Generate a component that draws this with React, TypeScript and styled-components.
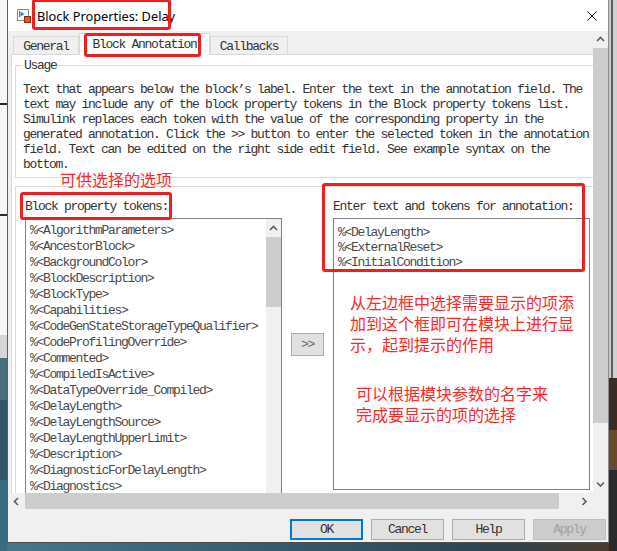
import React from "react";
import styled, { createGlobalStyle } from "styled-components";

const MONO = `"Liberation Mono", "DejaVu Sans Mono", monospace`;
const CJK = `"Noto Sans CJK SC", "Noto Sans CJK JP", sans-serif`;
const RED = "#ff2626";

const GlobalStyle = createGlobalStyle`
  html, body { margin: 0; padding: 0; }
  body { width: 617px; height: 551px; overflow: hidden; background: #2f5566; }
  * { box-sizing: border-box; }
`;

const Screen = styled.div`
  position: relative;
  width: 617px;
  height: 551px;
  display: grid;
  grid-template-columns: 7px 602px 8px;
  grid-template-rows: 543px 8px;
  overflow: hidden;
`;

const LeftDesk = styled.div`
  grid-column: 1;
  grid-row: 1 / span 2;
  background:
    linear-gradient(to bottom, transparent 0 103px, #2a2a2a 103px 105px, transparent 105px 214px, #2a2a2a 214px 216px, transparent 216px),
    linear-gradient(to bottom, #f7f7f7 0 335px, #d6d6d6 335px 358px, #4a6f7c 358px 400px, #2f5566 400px 480px, #3b6b80 480px);
`;

const RightDesk = styled.div`
  grid-column: 3;
  grid-row: 1 / span 2;
  background:
    linear-gradient(to bottom, transparent 0 378px, #3b2d22 378px 430px, #6a4a2a 430px 470px, #2b2a2a 470px),
    linear-gradient(to right, #c9c9c9 0 2px, #5d5d5d 2px 4px, #cfcfcf 4px);
`;

const BottomDesk = styled.div`
  grid-column: 2;
  grid-row: 2;
  background: linear-gradient(to right, #45778c 0%, #355a6c 45%, #2c4452 80%, #4b3a2c 100%);
`;

const Window = styled.div`
  grid-column: 2;
  grid-row: 1;
  display: flex;
  flex-direction: column;
  background: #f0f0f0;
  border-left: 1px solid #5f5f5f;
  border-right: 1px solid #8c8c8c;
  border-bottom: 1px solid #4d4d4d;
  overflow: hidden;
`;

const TitleBar = styled.div`
  height: 31px;
  flex: none;
  display: flex;
  align-items: center;
  padding: 0 11px 0 9px;
  background: #ffffff;
`;

const TitleText = styled.div`
  flex: 1;
  margin-left: 6px;
  font-family: "Noto Sans", "Open Sans", sans-serif;
  font-size: 12.8px;
  color: #000;
  white-space: nowrap;
`;

const Main = styled.div`
  height: 462px;
  flex: none;
  display: flex;
`;

const Viewport = styled.div`
  width: 585px;
  height: 462px;
  overflow: hidden;
  background: #f0f0f0;
`;

const Canvas = styled.div`
  width: 640px;
  padding-left: 3px;
`;

const TabBar = styled.div`
  height: 23px;
  display: flex;
  align-items: flex-end;
  padding-left: 2px;
`;

const Tab = styled.div<{ $active?: boolean; $w: number }>`
  width: ${(p) => p.$w}px;
  height: ${(p) => (p.$active ? 22 : 18)}px;
  margin-bottom: ${(p) => (p.$active ? -1 : 0)}px;
  position: relative;
  z-index: ${(p) => (p.$active ? 1 : 0)};
  background: ${(p) => (p.$active ? "#ffffff" : "#f0f0f0")};
  border: 1px solid #d9d9d9;
  border-bottom: none;
  display: flex;
  align-items: center;
  justify-content: center;
  padding-top: 1px;
  padding-bottom: ${(p) => (p.$active ? 2 : 0)}px;
  font-family: ${MONO};
  font-size: 13px;
  letter-spacing: -1.3px;
  color: #333;
  white-space: pre;
`;

const Panel = styled.div`
  height: 480px;
  background: #ffffff;
  border: 1px solid #d9d9d9;
  padding: 3px 0 0 3px;
`;

const Mono = styled.div`
  font-family: ${MONO};
  font-size: 13px;
  letter-spacing: -1.3px;
  line-height: 15px;
  color: #333;
  white-space: pre;
`;

const UsageSet = styled.fieldset`
  margin: 0;
  width: 620px;
  border: 1px solid #dcdcdc;
  padding: 9px 0 5px 7px;
`;

const Legend = styled.legend`
  margin-left: -1px;
  padding: 0 2px;
  font-family: ${MONO};
  font-size: 13px;
  letter-spacing: -1.3px;
  line-height: 15px;
  color: #333;
`;

const Group = styled.div`
  margin: 8px 0 0 0;
  width: 620px;
  height: 400px;
  border: 1px solid #dcdcdc;
  padding: 12px 0 0 9px;
  display: flex;
  align-items: flex-start;
`;

const Column = styled.div`
  width: 257px;
  flex: none;
  display: flex;
  flex-direction: column;
`;

const FieldLabel = styled(Mono)`
  margin-bottom: 4px;
`;

const ListBox = styled.div`
  height: 290px;
  border: 1px solid #828282;
  background: #ffffff;
  display: flex;
`;

const ListItems = styled.div`
  flex: 1;
  padding: 4px 0 0 4px;
  overflow: hidden;
`;

const ListItem = styled(Mono)`
  line-height: 16px;
  color: #4a4a4a;
`;

const ScrollTrack = styled.div<{ $dir: "v" | "h" }>`
  display: flex;
  flex-direction: ${(p) => (p.$dir === "v" ? "column" : "row")};
  flex: none;
  background: #f0f0f0;
`;

const ListScroll = styled(ScrollTrack)`
  width: 15px;
`;

const ArrowCell = styled.div<{ $size: number; $dir: "v" | "h" }>`
  flex: none;
  ${(p) => (p.$dir === "v" ? `height: ${p.$size}px;` : `width: ${p.$size}px;`)}
  display: flex;
  align-items: center;
  justify-content: center;
`;

const Thumb = styled.div<{ $len: number; $dir: "v" | "h" }>`
  flex: none;
  ${(p) => (p.$dir === "v" ? `height: ${p.$len}px;` : `width: ${p.$len}px;`)}
  background: #cdcdcd;
`;

const Spacer = styled.div`
  flex: 1;
`;

const MidColumn = styled.div`
  flex: none;
  margin: 134px 0 0 9px;
`;

const ShiftButton = styled.div`
  width: 33px;
  height: 23px;
  background: #e1e1e1;
  border: 1px solid #adadad;
  display: flex;
  align-items: center;
  justify-content: center;
  font-family: ${MONO};
  font-size: 13px;
  letter-spacing: -1.3px;
  color: #666;
`;

const RightColumn = styled(Column)`
  margin-left: 9px;
`;

const EditBox = styled.div`
  height: 272px;
  border: 1px solid #828282;
  background: #ffffff;
  padding: 6px 0 0 4px;
`;

const EditLine = styled(Mono)`
  color: #4a4a4a;
`;

const HRow = styled.div`
  height: 16px;
  flex: none;
  display: flex;
`;

const HScroll = styled(ScrollTrack)`
  width: 585px;
`;

const VScroll = styled(ScrollTrack)`
  width: 15px;
`;

const Corner = styled.div`
  width: 15px;
  background: #f0f0f0;
`;

const ButtonRow = styled.div`
  flex: 1;
  display: flex;
  justify-content: flex-end;
  align-items: flex-start;
  gap: 8px;
  padding: 10px 2px 0 0;
  background: #f0f0f0;
`;

const DlgButton = styled.div<{ $primary?: boolean; $disabled?: boolean }>`
  width: 73px;
  height: 21px;
  display: flex;
  align-items: center;
  justify-content: center;
  background: ${(p) => (p.$disabled ? "#cccccc" : "#e1e1e1")};
  border: ${(p) => (p.$primary ? "2px solid #0078d7" : p.$disabled ? "1px solid #bfbfbf" : "1px solid #adadad")};
  font-family: ${MONO};
  font-size: 13px;
  letter-spacing: -1.3px;
  color: ${(p) => (p.$disabled ? "#a0a0a0" : "#333")};
`;

const RedBox = styled.div<{ $x: number; $y: number; $w: number; $h: number }>`
  position: absolute;
  z-index: 5;
  left: ${(p) => p.$x}px;
  top: ${(p) => p.$y}px;
  width: ${(p) => p.$w}px;
  height: ${(p) => p.$h}px;
  border: 3px solid #f01e1e;
  border-radius: 3px;
  pointer-events: none;
`;

const Note = styled.div<{ $x: number; $y: number }>`
  position: absolute;
  z-index: 5;
  left: ${(p) => p.$x}px;
  top: ${(p) => p.$y}px;
  font-family: ${CJK};
  font-size: 16px;
  line-height: 21px;
  color: ${RED};
  white-space: pre;
  pointer-events: none;
`;

const Chevron = ({ dir }: { dir: "up" | "down" | "left" | "right" }) => {
  const d = {
    up: "M1 5 L4.5 1.5 L8 5",
    down: "M1 1.5 L4.5 5 L8 1.5",
    left: "M5 1 L1.5 4.5 L5 8",
    right: "M1.5 1 L5 4.5 L1.5 8",
  }[dir];
  const vertical = dir === "up" || dir === "down";
  return (
    <svg width={vertical ? 9 : 7} height={vertical ? 7 : 9} viewBox={vertical ? "0 0 9 7" : "0 0 7 9"}>
      <path d={d} fill="none" stroke="#606060" strokeWidth="1.7" />
    </svg>
  );
};

const BlockIcon = () => (
  <svg width="14" height="14" viewBox="0 0 14 14">
    <rect x="0.5" y="0.5" width="11" height="11" fill="#fafafa" stroke="#8a8a8a" />
    <path d="M2.5 2 L2.5 8" stroke="#2f7fd0" strokeWidth="1" />
    <path d="M3.5 2.5 L7.5 5 L3.5 7.5 Z" fill="#2f7fd0" />
    <rect x="7.5" y="7.5" width="6" height="6" fill="#e0552a" stroke="#8a2c10" />
  </svg>
);

const CloseIcon = () => (
  <svg width="10" height="10" viewBox="0 0 10 10">
    <path d="M0.5 0.5 L9.5 9.5 M9.5 0.5 L0.5 9.5" stroke="#111" strokeWidth="1" />
  </svg>
);

const usage = [
  "Text that appears below the block\u2019s label. Enter the text in the annotation field. The",
  "text may include any of the block property tokens in the Block property tokens list.",
  "Simulink replaces each token with the value of the corresponding property in the",
  "generated annotation. Click the >> button to enter the selected token in the annotation",
  "field. Text can be edited on the right side edit field. See example syntax on the",
  "bottom.",
];

const tokens = [
  "AlgorithmParameters",
  "AncestorBlock",
  "BackgroundColor",
  "BlockDescription",
  "BlockType",
  "Capabilities",
  "CodeGenStateStorageTypeQualifier",
  "CodeProfilingOverride",
  "Commented",
  "CompiledIsActive",
  "DataTypeOverride_Compiled",
  "DelayLength",
  "DelayLengthSource",
  "DelayLengthUpperLimit",
  "Description",
  "DiagnosticForDelayLength",
  "Diagnostics",
];

const chosen = ["DelayLength", "ExternalReset", "InitialCondition"];

export default function App() {
  return (
    <>
      <GlobalStyle />
      <Screen>
        <LeftDesk />
        <Window>
          <TitleBar>
            <BlockIcon />
            <TitleText>Block Properties: Delay</TitleText>
            <CloseIcon />
          </TitleBar>
          <Main>
            <Viewport>
              <Canvas>
                <TabBar>
                  <Tab $w={66}>General</Tab>
                  <Tab $w={131} $active>
                    Block Annotation
                  </Tab>
                  <Tab $w={78}>Callbacks</Tab>
                </TabBar>
                <Panel>
                  <UsageSet>
                    <Legend>Usage</Legend>
                    {usage.map((l, i) => (
                      <Mono key={i}>{l}</Mono>
                    ))}
                  </UsageSet>
                  <Group>
                    <Column>
                      <FieldLabel>Block property tokens:</FieldLabel>
                      <ListBox>
                        <ListItems>
                          {tokens.map((t) => (
                            <ListItem key={t}>{`%<${t}>`}</ListItem>
                          ))}
                        </ListItems>
                        <ListScroll $dir="v">
                          <ArrowCell $dir="v" $size={18}>
                            <Chevron dir="up" />
                          </ArrowCell>
                          <Thumb $dir="v" $len={70} />
                        </ListScroll>
                      </ListBox>
                    </Column>
                    <MidColumn>
                      <ShiftButton>&gt;&gt;</ShiftButton>
                    </MidColumn>
                    <RightColumn>
                      <FieldLabel>Enter text and tokens for annotation:</FieldLabel>
                      <EditBox>
                        {chosen.map((t) => (
                          <EditLine key={t}>{`%<${t}>`}</EditLine>
                        ))}
                      </EditBox>
                    </RightColumn>
                  </Group>
                </Panel>
              </Canvas>
            </Viewport>
            <VScroll $dir="v">
              <ArrowCell $dir="v" $size={17}>
                <Chevron dir="up" />
              </ArrowCell>
              <Thumb $dir="v" $len={375} />
              <Spacer />
              <ArrowCell $dir="v" $size={17}>
                <Chevron dir="down" />
              </ArrowCell>
            </VScroll>
          </Main>
          <HRow>
            <HScroll $dir="h">
              <ArrowCell $dir="h" $size={17}>
                <Chevron dir="left" />
              </ArrowCell>
              <Thumb $dir="h" $len={534} />
              <Spacer />
              <ArrowCell $dir="h" $size={17}>
                <Chevron dir="right" />
              </ArrowCell>
            </HScroll>
            <Corner />
          </HRow>
          <ButtonRow>
            <DlgButton $primary>OK</DlgButton>
            <DlgButton>Cancel</DlgButton>
            <DlgButton>Help</DlgButton>
            <DlgButton $disabled>Apply</DlgButton>
          </ButtonRow>
        </Window>
        <RightDesk />
        <BottomDesk />

        <RedBox $x={32} $y={-1} $w={139} $h={31} />
        <RedBox $x={84} $y={33} $w={117} $h={24} />
        <RedBox $x={20} $y={192} $w={152} $h={28} />
        <RedBox $x={322} $y={183} $w={263} $h={89} />
        <Note $x={60} $y={169}>可供选择的选项</Note>
        <Note $x={350} $y={292}>
          {"从左边框中选择需要显示的项添\n加到这个框即可在模块上进行显\n示，起到提示的作用"}
        </Note>
        <Note $x={356} $y={383}>{"可以根据模块参数的名字来\n完成要显示的项的选择"}</Note>
      </Screen>
    </>
  );
}
